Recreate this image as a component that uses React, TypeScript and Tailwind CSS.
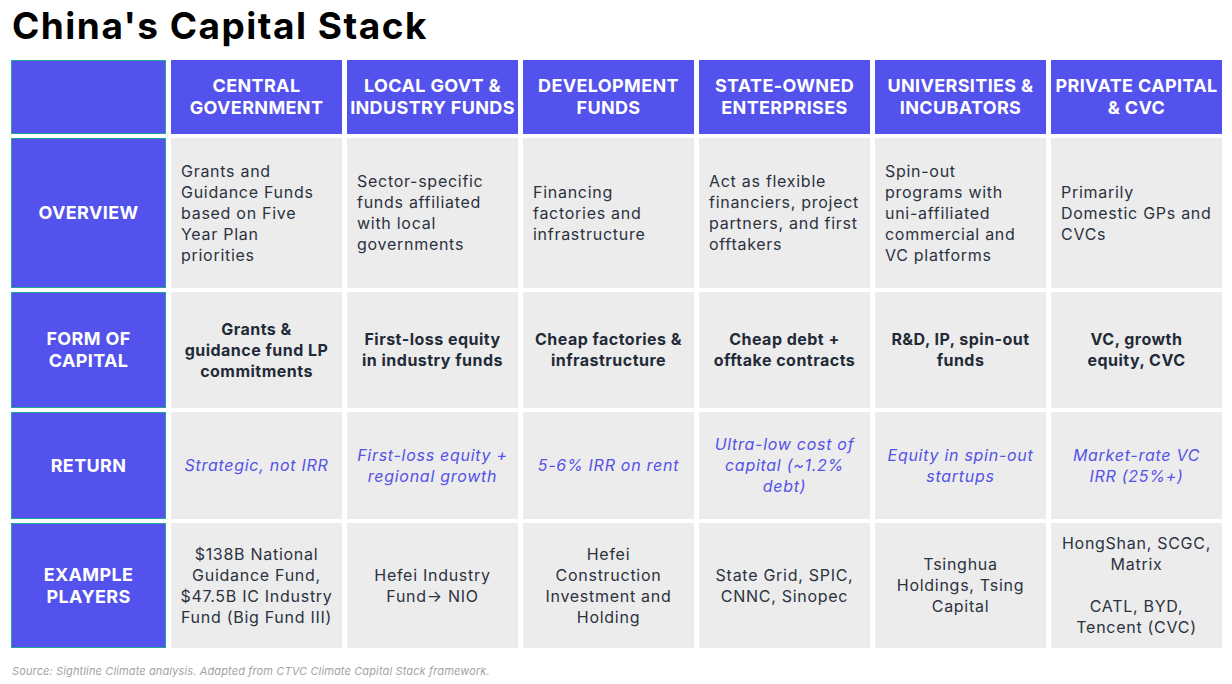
const font = { fontFamily: 'Inter, "Noto Sans", sans-serif' };

const columns = [
  {
    head: ['CENTRAL', 'GOVERNMENT'],
    overview: 'Grants and Guidance Funds based on Five Year Plan priorities',
    form: 'Grants & guidance fund LP commitments',
    ret: 'Strategic, not IRR',
    players: '$138B National Guidance Fund, $47.5B IC Industry Fund (Big Fund III)',
  },
  {
    head: ['LOCAL GOVT &', 'INDUSTRY FUNDS'],
    overview: 'Sector-specific funds affiliated with local governments',
    form: 'First-loss equity in industry funds',
    ret: 'First-loss equity + regional growth',
    players: 'Hefei Industry Fund\u2192 NIO',
  },
  {
    head: ['DEVELOPMENT', 'FUNDS'],
    overview: 'Financing factories and infrastructure',
    form: 'Cheap factories & infrastructure',
    ret: '5-6% IRR on rent',
    players: 'Hefei\nConstruction\nInvestment and\nHolding',
  },
  {
    head: ['STATE-OWNED', 'ENTERPRISES'],
    overview: 'Act as flexible financiers, project partners, and first offtakers',
    form: 'Cheap debt + offtake contracts',
    ret: 'Ultra-low cost of capital (~1.2% debt)',
    players: 'State Grid, SPIC, CNNC, Sinopec',
  },
  {
    head: ['UNIVERSITIES &', 'INCUBATORS'],
    overview: 'Spin-out programs with uni-affiliated commercial and VC platforms',
    form: 'R&D, IP, spin-out funds',
    ret: 'Equity in spin-out startups',
    players: 'Tsinghua Holdings, Tsing Capital',
  },
  {
    head: ['PRIVATE CAPITAL', '& CVC'],
    overview: 'Primarily Domestic GPs and CVCs',
    form: 'VC, growth equity, CVC',
    ret: 'Market-rate VC IRR (25%+)',
    players: 'HongShan, SCGC, Matrix\n\nCATL, BYD, Tencent (CVC)',
  },
];

function Label({ lines }: { lines: string[] }) {
  return (
    <div className="flex flex-col items-center justify-center bg-[#5452ed] border border-[#1ea896] text-white text-[18px] leading-[22px] font-bold text-center tracking-[0.02em]">
      {lines.map((l, i) => (
        <span key={i}>{l}</span>
      ))}
    </div>
  );
}

export default function App() {
  return (
    <div className="w-[1232px] h-[684px] bg-white overflow-hidden" style={font}>
      <h1 className="pl-[12px] pt-[4px] text-[37px] leading-[44px] font-bold text-black tracking-[0.04em]">
        China's Capital Stack
      </h1>
      <div className="ml-[11px] mt-[12px] grid grid-cols-[155px_repeat(6,171px)] grid-rows-[74px_150px_116px_107px_125px] gap-x-[5px] gap-y-[4px]">
        <Label lines={[]} />
        {columns.map((c, i) => (
          <div
            key={i}
            className="flex flex-col items-center justify-center bg-[#5452ed] text-white text-[18px] leading-[22px] font-bold text-center tracking-[0.02em]"
          >
            {c.head.map((l, j) => (
              <span key={j} className="whitespace-nowrap">{l}</span>
            ))}
          </div>
        ))}

        <Label lines={['OVERVIEW']} />
        {columns.map((c, i) => (
          <div key={i} className="flex items-center bg-[#ececec] pl-[10px] pr-[8px] text-[16px] leading-[21px] text-[#2b3240] tracking-[0.045em]">
            {c.overview}
          </div>
        ))}

        <Label lines={['FORM OF', 'CAPITAL']} />
        {columns.map((c, i) => (
          <div key={i} className="flex items-center justify-center bg-[#ececec] px-[10px] text-center text-[16px] leading-[21px] font-bold text-[#222a38] tracking-[0.03em]">
            {c.form}
          </div>
        ))}

        <Label lines={['RETURN']} />
        {columns.map((c, i) => (
          <div key={i} className="flex items-center justify-center bg-[#ececec] px-[10px] text-center text-[16px] leading-[21px] italic text-[#5552e6] tracking-[0.045em]">
            {c.ret}
          </div>
        ))}

        <Label lines={['EXAMPLE', 'PLAYERS']} />
        {columns.map((c, i) => (
          <div key={i} className="flex items-center justify-center bg-[#ececec] px-[8px] text-center text-[16px] leading-[21px] text-[#2b3240] whitespace-pre-line tracking-[0.045em]">
            {c.players}
          </div>
        ))}
      </div>
      <p className="pl-[12px] mt-[16px] text-[11px] leading-[14px] italic text-[#a3a3a3] tracking-[0.012em]">
        Source: Sightline Climate analysis. Adapted from CTVC Climate Capital Stack framework.
      </p>
    </div>
  );
}
